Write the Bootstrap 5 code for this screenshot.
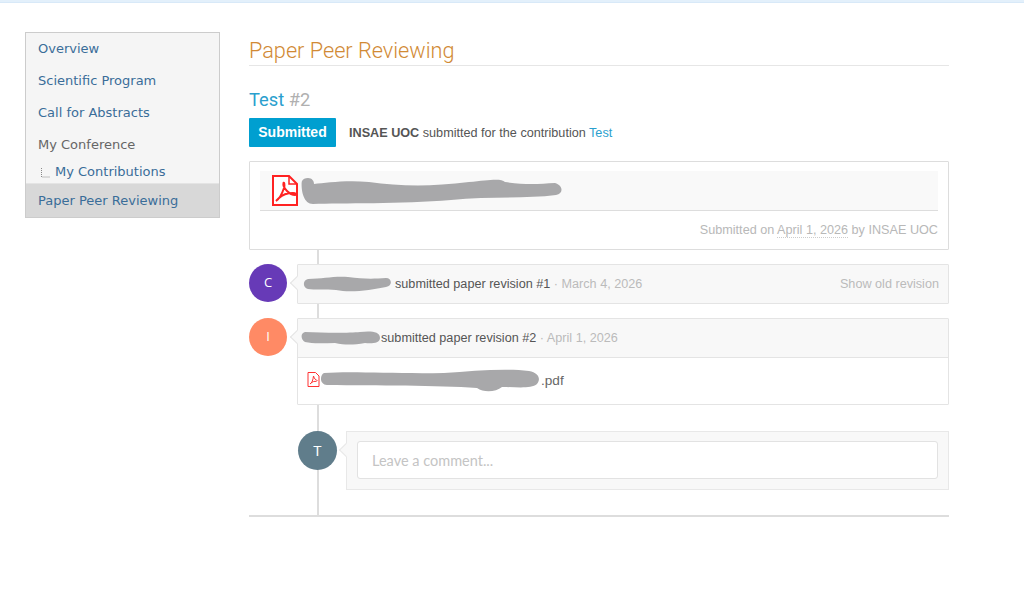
<!DOCTYPE html>
<html lang="en">
<head>
<meta charset="utf-8">
<title>Paper Peer Reviewing</title>
<link href="https://cdn.jsdelivr.net/npm/bootstrap@5.3.0/dist/css/bootstrap.min.css" rel="stylesheet">
<style>
html,body{height:597px;overflow:hidden;background:#fff}
body{font-family:"Liberation Sans",Arial,sans-serif;font-size:12.65px;color:#555;line-height:1.5}
.top-rule{height:3px;background:#e3f0fb;border-bottom:1px solid #d8e9f8}
.shell{padding:29px 0 0 25px;gap:29px}
.side-menu{width:195px;height:186px;background:#f5f5f5;border:1px solid #ccc;font-family:"DejaVu Sans",Verdana,sans-serif;font-size:13px;flex:none}
.side-menu a,.side-menu span.lbl{display:block;color:#3a6d99;text-decoration:none;line-height:16px}
.side-menu .mi{padding:8px 12px;height:32px}
.side-menu .lbl{color:#666!important}
.side-menu .sub{height:23px;padding:3px 0 0 14px;display:flex;gap:3px;align-items:flex-start}
.side-menu .act{background:#d8d8d8;border-top:1px solid #e4e4e4;height:34px;padding:9px 12px;margin-top:-1px}
.main-col{width:700px;flex:none}
.pg-title{font-family:Roboto,sans-serif;font-weight:300;font-size:21.7px;line-height:30px;color:#d18a35;margin:4px 0 0;height:30px;border-bottom:1px solid #e6e6e6}
.rev-title{font-family:Roboto,sans-serif;font-weight:400;font-size:18.3px;line-height:24px;color:#2a9fce;margin:22px 0 6px}
.rev-title span{color:#b0b0b0}
.state-tag{background:#009fd0;color:#fff;font-weight:700;font-size:14px;width:87px;height:29px;line-height:29px;text-align:center;border-radius:1px;flex:none}
.intro-row{gap:13px}
.intro-text{padding-top:1px}
.lnk{color:#2a9fce;text-decoration:none}
.box-main{border:1px solid #ddd;height:89px;margin-top:14px;padding:9px 10px;border-radius:1px}
.file-row{height:40px;background:#f9f9f9;border-bottom:1px solid #ddd;padding-left:11px}
.sub-line{color:#b8b8b8;text-align:right;margin-top:9px;line-height:20px}
.sub-line abbr{text-decoration:none;border-bottom:1px dotted #ccc;cursor:default}
.tl{background:linear-gradient(#ddd,#ddd) 68px 0/2px 100% no-repeat;border-bottom:2px solid #ddd;padding:14px 0 25px;height:267px}
.avt{width:38px;height:38px;border-radius:50%;color:#fff;font-size:13px;display:flex;align-items:center;justify-content:center;flex:none;font-family:"Open Sans",sans-serif}
.av-c{background:#673ab7}.av-i{background:#ff8a65}.av-t{background:#607d8b;width:39px;height:39px;margin-left:49px;font-family:Lato,sans-serif;font-size:14px}
.ev-row{gap:10px;margin-bottom:14px}
.ev-box{flex:1;border:1px solid #e4e4e4;border-radius:1px;position:relative;background:#fff}
.ev-box::before{content:"";position:absolute;left:-6px;top:13px;width:10px;height:10px;background:#f8f8f8;border-left:1px solid #e4e4e4;border-bottom:1px solid #e4e4e4;transform:rotate(45deg)}
.ev-head{background:#f8f8f8;height:38px;padding:0 9px 0 4px;position:relative}
.ev-head.sep{border-bottom:1px solid #e4e4e4;height:39px;padding-left:2px}
.ev-body{height:46px;padding-left:9px;color:#666;font-size:13.6px}
.muted-g{color:#bbb}.old-link{color:#bbb;text-decoration:none}
.gap-small{margin-left:3px}.gap-tiny{margin-left:1px}
.comment-row{gap:9px;margin-top:26px}
.comment-box{flex:1;height:59px;background:#f8f8f8;border:1px solid #e8e8e8;padding:9px 10px;position:relative}
.comment-box::before{content:"";position:absolute;left:-6px;top:13px;width:10px;height:10px;background:#f8f8f8;border-left:1px solid #e8e8e8;border-bottom:1px solid #e8e8e8;transform:rotate(45deg)}
.comment-input{height:38px;font-family:Lato,sans-serif;font-size:14.5px;border:1px solid #e2e2e2;border-radius:3px;padding:0 14px;box-shadow:none}
.comment-input::placeholder{color:#c4c4c4}
.blob{display:block;flex:none}
.blob-big{margin-left:2px}.blob-pdf{margin-left:1px}
</style>
</head>
<body>
<div class="top-rule"></div>
<div class="d-flex shell">
  <nav class="side-menu">
    <div class="mi"><a href="#">Overview</a></div>
    <div class="mi"><a href="#">Scientific Program</a></div>
    <div class="mi"><a href="#">Call for Abstracts</a></div>
    <div class="mi"><span class="lbl">My Conference</span></div>
    <div class="sub">
      <svg width="12" height="12" viewBox="0 0 12 12" class="mt-1"><path d="M1.500 0v9h8" fill="none" stroke="#888" stroke-dasharray="1 1"/></svg>
      <a href="#">My Contributions</a>
    </div>
    <div class="act"><a href="#">Paper Peer Reviewing</a></div>
  </nav>
  <main class="main-col">
    <h1 class="pg-title">Paper Peer Reviewing</h1>
    <h2 class="rev-title">Test <span>#2</span></h2>
    <div class="d-flex align-items-center intro-row">
      <div class="state-tag">Submitted</div>
      <div class="intro-text"><strong>INSAE UOC</strong> submitted for the contribution <a class="lnk" href="#">Test</a></div>
    </div>
    <div class="box-main">
      <div class="file-row d-flex align-items-center">
        <svg width="28" height="31" viewBox="0 0 28 31"><path d="M2 1h16l8 8v21H2z" fill="#fff" stroke="#f22" stroke-width="2"/><path d="M18 1v8h8" fill="none" stroke="#f22" stroke-width="1.500"/><path d="M5 26C8 24 11 19 13 13 14 9 13 7 12.500 8 12 10 13 13 16 16 18 18 21 20 24 20 26 20 25 18 22 18 17 18 11 20 8 23 6 25 5 26 5 26z" fill="none" stroke="#f22" stroke-width="2"/></svg>
        <svg class="blob blob-big" width="262" height="28" viewBox="0 0 262 28"><path d="M7 1c4 0 6 3 6 6 12-1 30-4 55-2 30 4 60 5 100 0 20-2 32-4 36 0 20 3 34 2 50 1 8 2 9 11 1 12-30 4-68 1-105 5-50 4-110 3-138 4C0 27 0 6 1 4c1-2 3-3 6-3z" fill="#a8a8aa"/></svg>
      </div>
      <div class="sub-line">Submitted on <abbr title="April 1, 2026">April 1, 2026</abbr> by INSAE UOC</div>
    </div>
    <section class="tl">
      <div class="d-flex ev-row">
        <div class="avt av-c">C</div>
        <div class="ev-box"><div class="ev-head d-flex align-items-center">
          <svg class="blob" width="90" height="18" viewBox="0 0 90 18"><path d="M6 4c15 0 25-3 40-2 15 2 25 2 38 1 6 0 7 8 0 9-15 3-35 6-50 3-10-1-22 0-28-1C0 12 1 5 6 4z" fill="#a8a8aa"/></svg>
          <span class="gap-small">submitted paper revision #1 <span class="muted-g">· March 4, 2026</span></span>
          <a class="old-link ms-auto" href="#">Show old revision</a>
        </div></div>
      </div>
      <div class="d-flex ev-row">
        <div class="avt av-i">I</div>
        <div class="ev-box">
          <div class="ev-head sep d-flex align-items-center">
            <svg class="blob" width="80" height="14" viewBox="0 0 80 14"><path d="M5 1c20 1 45 1 55 0 10-1 20-1 20 6 0 5-8 6-15 5-12 2-20 2-30 0-10 0-22 1-30-1C1 9 0 2 5 1z" fill="#a8a8aa"/></svg>
            <span class="gap-tiny">submitted paper revision #2 <span class="muted-g">· April 1, 2026</span></span>
          </div>
          <div class="ev-body d-flex align-items-center">
            <svg width="13" height="15" viewBox="0 0 13 15" class="mb-1"><path d="M1 .5h7.500L12 4v10.500H1z" fill="#fff" stroke="#f33"/><path d="M3 12c2-1 3-4 3.500-8 1 3 2 4 4 4.500M3.500 11.500c2-2 4-2.500 6-2" fill="none" stroke="#f33"/></svg>
            <svg class="blob blob-pdf" width="220" height="24" viewBox="0 0 220 24"><path d="M3 4c30-2 70 1 120 0 30-2 60-5 85-2 10 2 12 8 8 13-6 5-20 3-35 3-6 5-18 6-25 1-40-3-100-2-150-3C-2 15-1 6 3 4z" fill="#a8a8aa"/></svg>
            <span>.pdf</span>
          </div>
        </div>
      </div>
      <div class="d-flex comment-row">
        <div class="avt av-t">T</div>
        <div class="comment-box">
          <input class="form-control comment-input" type="text" placeholder="Leave a comment...">
        </div>
      </div>
    </section>
  </main>
</div>
<script src="https://cdn.jsdelivr.net/npm/bootstrap@5.3.0/dist/js/bootstrap.bundle.min.js"></script>
</body>
</html>
